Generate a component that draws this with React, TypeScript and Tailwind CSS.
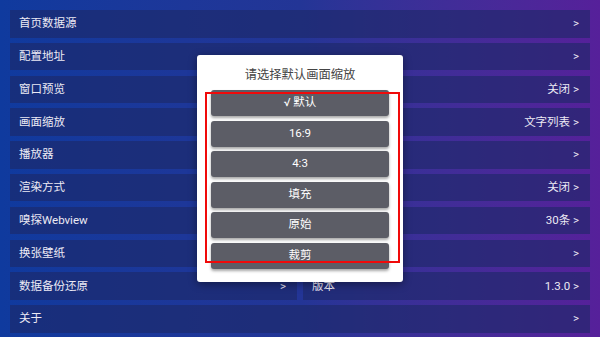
import React from "react";

const rows: { label: string; value?: string }[] = [
  { label: "首页数据源" },
  { label: "配置地址" },
  { label: "窗口预览", value: "关闭" },
  { label: "画面缩放", value: "文字列表" },
  { label: "播放器" },
  { label: "渲染方式", value: "关闭" },
  { label: "嗅探Webview", value: "30条" },
  { label: "换张壁纸" },
];

const options = ["√ 默认", "16:9", "4:3", "填充", "原始", "裁剪"];

function Row({ label, value, className = "" }: { label: string; value?: string; className?: string }) {
  return (
    <div className={`h-[27.5px] flex items-center justify-between pl-[9px] pr-[11px] bg-[#1c2866]/60 ${className}`}>
      <span>{label}</span>
      <span>{value ? `${value} >` : ">"}</span>
    </div>
  );
}

export default function App() {
  return (
    <div
      className="relative w-[600px] h-[337px] overflow-hidden bg-gradient-to-r from-[#0f3a9e] via-[#233596] to-[#56209a] text-[#eceaf4] text-[11.5px]"
      style={{ fontFamily: '"Roboto", "Noto Sans CJK SC", sans-serif' }}
    >
      <div className="flex flex-col gap-[5.3px] pt-[10px] px-[10px]">
        {rows.map((r) => (
          <Row key={r.label} label={r.label} value={r.value} />
        ))}
        <div className="flex gap-[6px]">
          <Row label="数据备份还原" className="flex-1" />
          <Row label="版本" value="1.3.0" className="flex-1" />
        </div>
        <Row label="关于" />
      </div>

      <div className="absolute left-[197px] top-[55px] w-[206px] h-[227px] bg-white rounded-[3px] shadow-[0_2px_8px_rgba(0,0,0,0.4)] overflow-hidden">
        <div className="h-[35px] flex items-end justify-center text-[#444] text-[12.3px] pb-[6px]">
          请选择默认画面缩放
        </div>
        <div className="flex flex-col gap-[4.5px] px-[14px]">
          {options.map((o) => (
            <div
              key={o}
              className="h-[26px] shrink-0 rounded-[3px] bg-[#5c5d66] text-white text-[11.5px] flex items-center justify-center shadow-[0_2px_3px_rgba(0,0,0,0.35)]"
            >
              {o}
            </div>
          ))}
        </div>
        <div className="absolute left-[8px] top-[37px] w-[195px] h-[171px] border-[2.5px] border-[#f00a0a]" />
      </div>
    </div>
  );
}
